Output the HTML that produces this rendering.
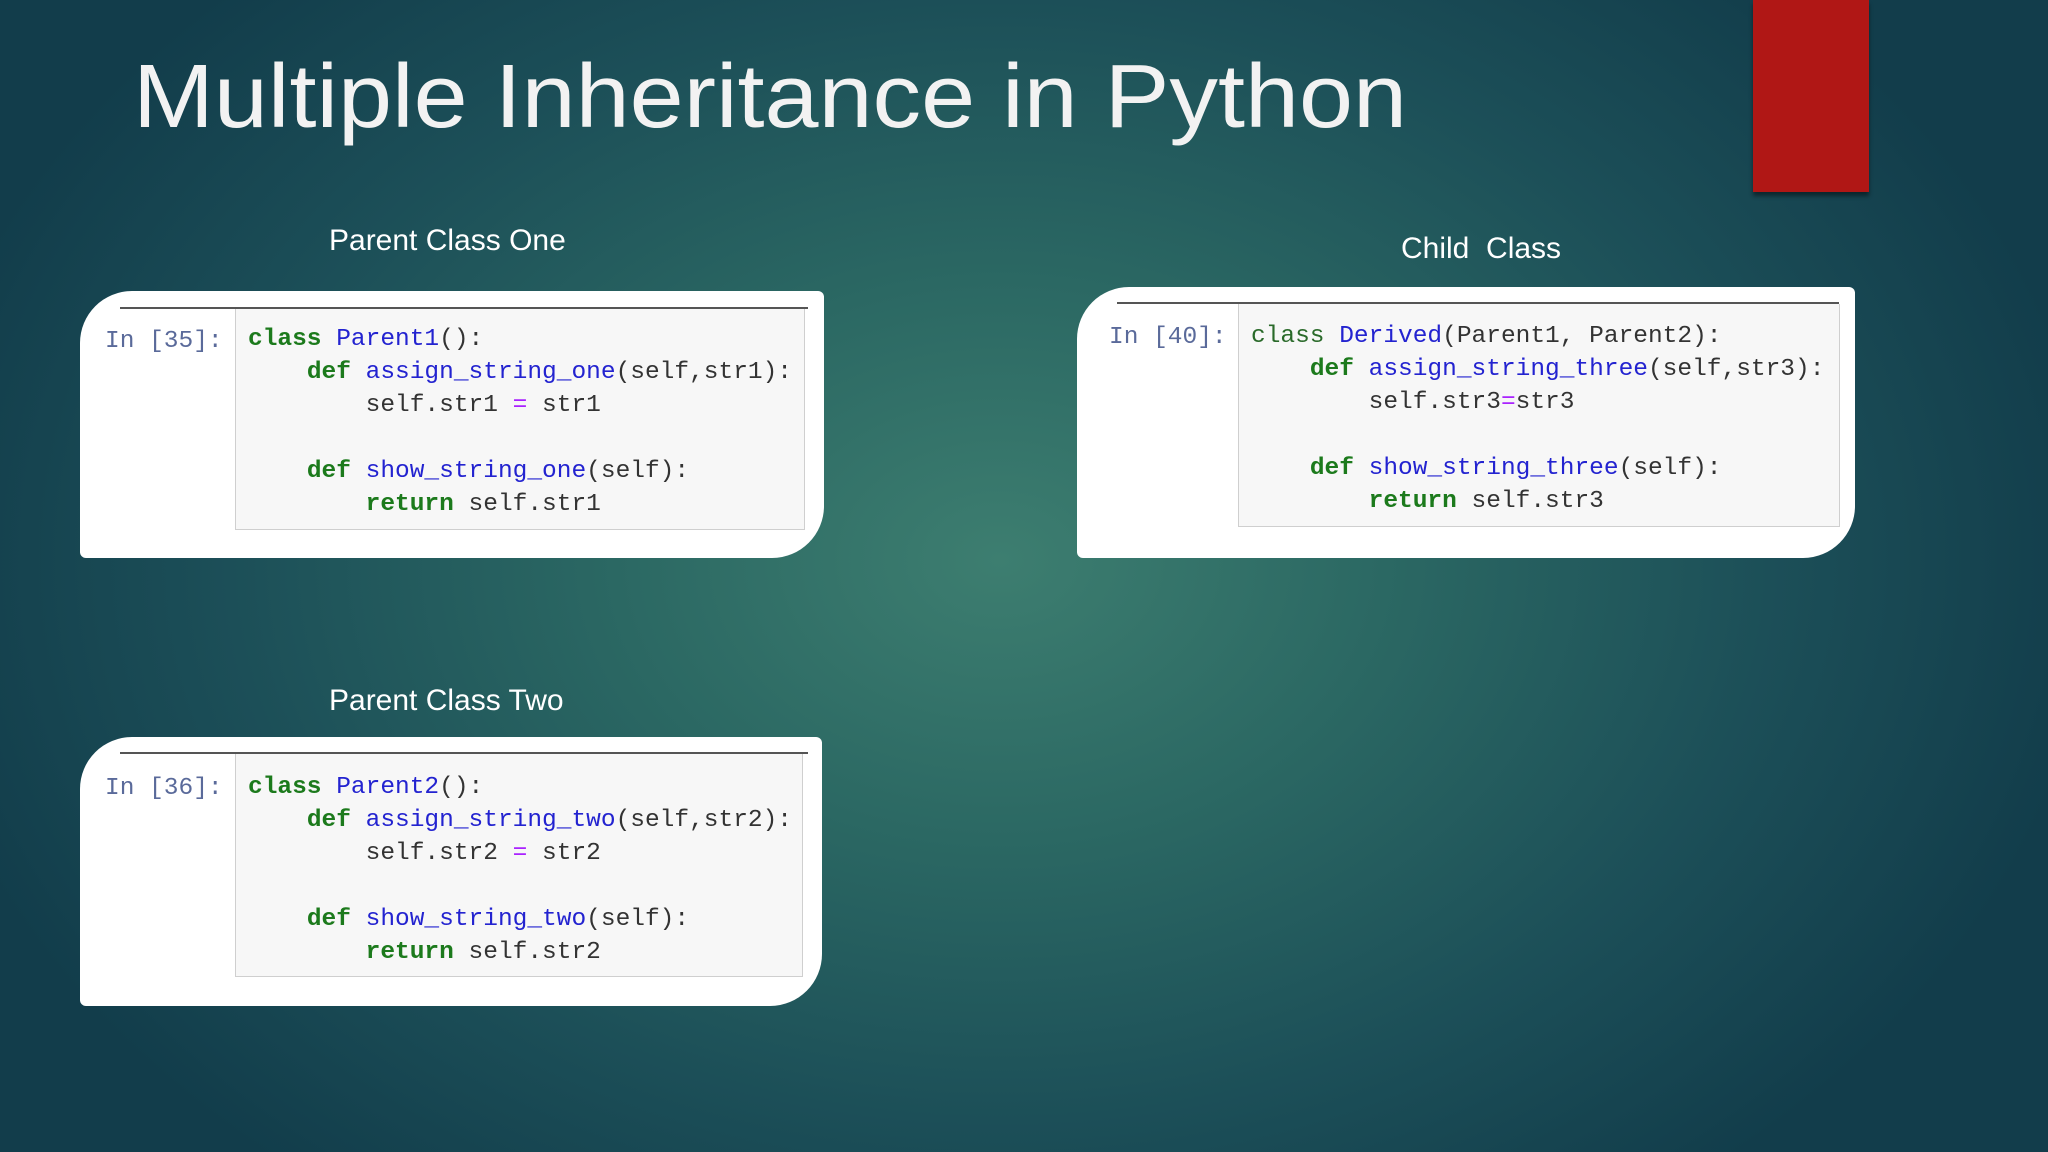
<!DOCTYPE html>
<html><head><meta charset="utf-8"><style>
html,body{margin:0;padding:0}
body{width:2048px;height:1152px;overflow:hidden;position:relative;
background:radial-gradient(ellipse 1100px 800px at 1000px 560px,#3d7e70 0%,#2b6863 35%,#1c4f58 70%,#123d4b 100%);
font-family:"Liberation Sans",sans-serif}
.red{position:absolute;left:1753px;top:0;width:116px;height:192px;background:#b01715;box-shadow:0 4px 4px rgba(0,0,0,.45)}
.title{position:absolute;left:0;top:0}
.lbl{position:absolute;color:#fff;font-size:30px;white-space:pre}
.box{position:absolute;background:#fff;border-radius:52px 6px 52px 6px;overflow:hidden}
.top{position:absolute;height:2px;background:#555}
.prompt{position:absolute;font-family:"Liberation Mono",monospace;font-size:24.5px;color:#5a6a9a;line-height:33px}
.code{position:absolute;background:#f7f7f7;border:1px solid #cfcfcf;border-top:none;overflow:hidden}
pre{margin:0;font-family:"Liberation Mono",monospace;font-size:24.5px;line-height:33px;color:#333}
.k{color:#1c7a1c;font-weight:bold}.n{color:#2323d0}.o{color:#aa22ff}
</style></head><body>
<div class="red"></div>
<svg class="title" width="2048" height="200"><text x="133" y="127" font-family="Liberation Sans, sans-serif" font-size="90" fill="#f2f2f2" textLength="1274" lengthAdjust="spacingAndGlyphs">Multiple Inheritance in Python</text></svg>

<div class="lbl" style="left:329px;top:224px">Parent Class One</div>
<div class="lbl" style="left:329px;top:684px">Parent Class Two</div>
<div class="lbl" style="left:1401px;top:232px">Child  Class</div>

<div class="box" style="left:80px;top:291px;width:744px;height:267px">
 <div class="top" style="left:40px;top:16px;width:688px"></div>
 <div class="prompt" style="left:25px;top:34px">In [35]:</div>
 <div class="code" style="left:155px;top:18px;width:568px;height:220px">
 <pre style="padding:14px 0 0 12px"><span class="k">class</span> <span class="n">Parent1</span>():
    <span class="k">def</span> <span class="n">assign_string_one</span>(self,str1):
        self.str1 <span class="o">=</span> str1

    <span class="k">def</span> <span class="n">show_string_one</span>(self):
        <span class="k">return</span> self.str1</pre></div>
</div>

<div class="box" style="left:80px;top:737px;width:742px;height:269px">
 <div class="top" style="left:40px;top:15px;width:688px"></div>
 <div class="prompt" style="left:25px;top:35px">In [36]:</div>
 <div class="code" style="left:155px;top:17px;width:566px;height:222px">
 <pre style="padding:17px 0 0 12px"><span class="k">class</span> <span class="n">Parent2</span>():
    <span class="k">def</span> <span class="n">assign_string_two</span>(self,str2):
        self.str2 <span class="o">=</span> str2

    <span class="k">def</span> <span class="n">show_string_two</span>(self):
        <span class="k">return</span> self.str2</pre></div>
</div>

<div class="box" style="left:1077px;top:287px;width:778px;height:271px">
 <div class="top" style="left:40px;top:15px;width:722px"></div>
 <div class="prompt" style="left:32px;top:34px">In [40]:</div>
 <div class="code" style="left:161px;top:17px;width:600px;height:222px">
 <pre style="padding:16px 0 0 12px"><span class="k" style="font-weight:normal;color:#2a6a2a">class</span> <span class="n">Derived</span>(Parent1, Parent2):
    <span class="k">def</span> <span class="n">assign_string_three</span>(self,str3):
        self.str3<span class="o">=</span>str3

    <span class="k">def</span> <span class="n">show_string_three</span>(self):
        <span class="k">return</span> self.str3</pre></div>
</div>
</body></html>
